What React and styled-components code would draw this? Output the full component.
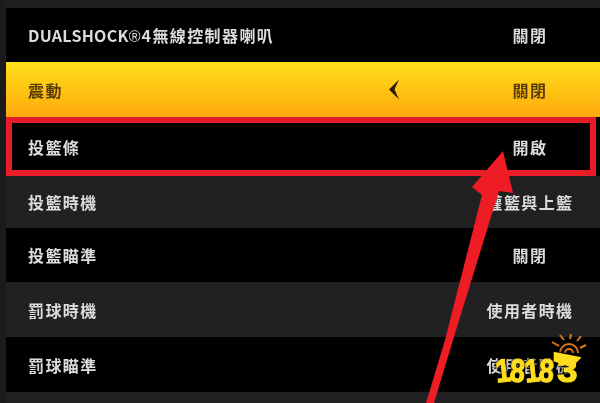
import React from 'react'
import styled, { createGlobalStyle } from 'styled-components'

const rows = [
  { latin: 'DUALSHOCK', mark: '®', label: '4無線控制器喇叭', value: '關閉', kind: 'black', height: 54 },
  { label: '震動', value: '關閉', kind: 'yellow', height: 55, arrow: true },
  { label: '投籃條', value: '開啟', kind: 'marked', height: 59 },
  { label: '投籃時機', value: '灌籃與上籃', kind: 'grey', height: 52 },
  { label: '投籃瞄準', value: '關閉', kind: 'black', height: 54 },
  { label: '罰球時機', value: '使用者時機', kind: 'grey', height: 55 },
  { label: '罰球瞄準', value: '使用者時機', kind: 'black', height: 55 },
  { label: '', value: '', kind: 'grey', height: 11 },
]

const digits = [
  { d: '1', width: 10, tilt: -6 },
  { d: '8', width: 17, tilt: 4 },
  { d: '1', width: 10, tilt: -6 },
  { d: '8', width: 17, tilt: 4 },
]

export default () => {
  return (
    <>
      <Global />
      <Screen>
        <TopBar />
        {rows.map((r, i) => (
          <Row key={i} $kind={r.kind} $height={r.height}>
            <Label $kind={r.kind}>
              {r.latin && <Latin>{r.latin}</Latin>}
              {r.mark && <RegMark>{r.mark}</RegMark>}
              {r.label}
            </Label>
            {r.arrow && <Chevron />}
            <Value $kind={r.kind}>{r.value}</Value>
          </Row>
        ))}
        <Arrow viewBox="0 0 600 403">
          <path d="M503 151 L513 193 L499 191 L453 340 L434 403 L426 403 L445 340 L482 195 L472 187 Z" fill="#ee1c25" />
        </Arrow>
        <Logo>
          <Sun viewBox="0 0 36 20">
            <path d="M9 19 A9 9 0 0 1 27 19" fill="none" stroke="#d9771f" strokeWidth="2" />
            <path d="M14 19 A4 4 0 0 1 22 19" fill="none" stroke="#d9771f" strokeWidth="2" />
            <path d="M1 8 L8 12 M9 1 L13 6 M20 0 L19 5 M30 2 L26 7 M35 11 L29 14" stroke="#d9771f" strokeWidth="2" />
          </Sun>
          <Digits>
            {digits.map((x, i) => (
              <Digit key={i} $width={x.width} $tilt={x.tilt}>{x.d}</Digit>
            ))}
            <LastDigit>3</LastDigit>
          </Digits>
        </Logo>
      </Screen>
    </>
  )
}

const Global = createGlobalStyle`
  html, body {
    margin: 0;
    padding: 0;
    background: #1b1b1b;
  }
`

const Screen = styled.div`
  position: relative;
  width: 600px;
  height: 403px;
  overflow: hidden;
  padding-left: 6px;
  box-sizing: border-box;
  background: #1b1b1b;
  font-family: "Noto Sans CJK TC", "Liberation Sans", sans-serif;
`

const TopBar = styled.div`
  height: 8px;
  background: #1e1e1e;
`

const rowBackground = {
  black: '#000',
  grey: '#212121',
  marked: '#000',
  yellow: 'linear-gradient(#ffdf1a, #ffa90d)',
}

const Row = styled.div`
  display: flex;
  align-items: center;
  box-sizing: border-box;
  height: ${p => p.$height}px;
  background: ${p => rowBackground[p.$kind]};
  padding-left: ${p => (p.$kind === 'marked' ? 16 : 22)}px;
  padding-right: ${p => (p.$kind === 'marked' ? 0 : 5)}px;
  margin-right: ${p => (p.$kind === 'marked' ? 4 : 0)}px;
  border: ${p => (p.$kind === 'marked' ? '6px solid #e81d27' : 'none')};
  box-shadow: ${p => (p.$kind === 'marked' ? '4px 0 0 #000' : 'none')};
`

const Label = styled.div`
  flex: 1;
  font-size: 16px;
  font-weight: 700;
  letter-spacing: 1.4px;
  white-space: nowrap;
  color: ${p => (p.$kind === 'yellow' ? '#5a3c08' : '#dcdcdc')};
  filter: blur(0.6px);
`

const Latin = styled.span`
  letter-spacing: 0.3px;
`

const RegMark = styled.span`
  font-family: "Liberation Sans", sans-serif;
  font-weight: 400;
  letter-spacing: 1px;
`

const Value = styled.div`
  flex: 0 0 ${p => (p.$kind === 'marked' ? 120 : 130)}px;
  text-align: center;
  font-size: 16px;
  font-weight: 700;
  letter-spacing: 1.4px;
  white-space: nowrap;
  color: ${p => (p.$kind === 'yellow' ? '#5a3c08' : '#dcdcdc')};
  filter: blur(0.6px);
`

const Chevron = styled.div`
  flex: 0 0 10px;
  height: 20px;
  margin-right: 66px;
  background: #2a1c08;
  clip-path: polygon(0 50%, 100% 0, 55% 50%, 100% 100%);
`

const Arrow = styled.svg`
  position: absolute;
  left: 0;
  top: 0;
  width: 600px;
  height: 403px;
`

const Logo = styled.div`
  position: absolute;
  left: 486px;
  top: 334px;
  width: 92px;
  display: flex;
  flex-direction: column;
  align-items: flex-end;
`

const Sun = styled.svg`
  width: 36px;
  height: 20px;
  margin-right: -9px;
`

const Digits = styled.div`
  display: flex;
  align-items: flex-end;
  gap: 1px;
  margin-top: 2px;
  font-family: "Liberation Sans", sans-serif;
  font-weight: 700;
  color: #ffdc1e;
  filter: drop-shadow(0 0 1px #000) drop-shadow(0 0 1px #000);
`

const Digit = styled.span`
  display: flex;
  justify-content: center;
  flex: 0 0 ${p => p.$width}px;
  min-width: 0;
  font-size: 27px;
  line-height: 30px;
  -webkit-text-stroke: 1px #ffdc1e;
  transform: rotate(${p => p.$tilt}deg) scaleY(1.2);
`

const LastDigit = styled.span`
  position: relative;
  flex: 0 0 21px;
  min-width: 0;
  text-align: center;
  font-size: 27px;
  line-height: 30px;
  margin-left: 1px;
  -webkit-text-stroke: 1px #ffdc1e;
  transform: scale(1.35, 1.2);

  &::before {
    content: '';
    position: absolute;
    left: 0;
    top: -1px;
    width: 100%;
    height: 13px;
    background: #ffdc1e;
    clip-path: polygon(0 0, 100% 35%, 65% 100%, 0 60%);
  }
`
